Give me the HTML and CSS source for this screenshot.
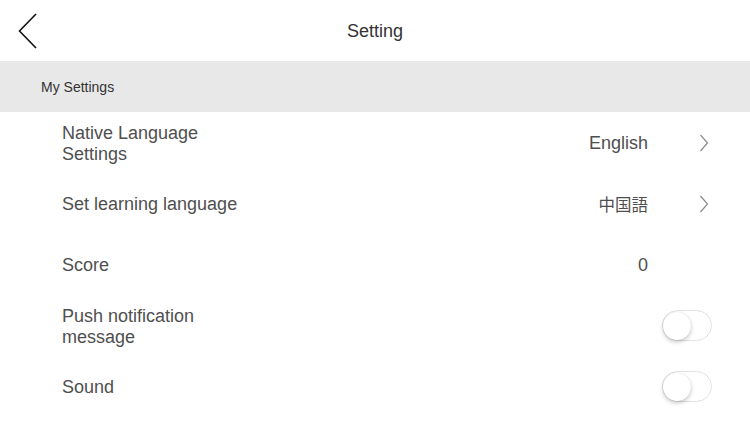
FILE: index.html
```html
<!DOCTYPE html>
<html lang="en">
<head>
<meta charset="utf-8">
<title>Setting</title>
<link rel="stylesheet" href="styles.css">
</head>
<body>
<div class="screen">
  <header class="topbar">
    <button class="back" aria-label="Back">
      <svg width="20" height="36" viewBox="0 0 20 36"><path d="M18 1 L1.5 18 L18 35" fill="none" stroke="#111" stroke-width="1.6"/></svg>
    </button>
    <h1 class="title">Setting</h1>
    <span class="spacer"></span>
  </header>
  <div class="section">My Settings</div>
  <ul class="list">
    <li class="row">
      <span class="label">Native Language Settings</span>
      <span class="value">English</span>
      <span class="trail"><svg class="chev" width="10" height="18" viewBox="0 0 10 18"><path d="M1.5 1 L8.5 9 L1.5 17" fill="none" stroke="#8a8a8a" stroke-width="1.2"/></svg></span>
    </li>
    <li class="row">
      <span class="label">Set learning language</span>
      <span class="value cjk">中国語</span>
      <span class="trail"><svg class="chev" width="10" height="18" viewBox="0 0 10 18"><path d="M1.5 1 L8.5 9 L1.5 17" fill="none" stroke="#8a8a8a" stroke-width="1.2"/></svg></span>
    </li>
    <li class="row">
      <span class="label">Score</span>
      <span class="value">0</span>
      <span class="trail"></span>
    </li>
    <li class="row">
      <span class="label">Push notification message</span>
      <span class="value"></span>
      <span class="trail"><span class="toggle"><span class="knob"></span></span></span>
    </li>
    <li class="row">
      <span class="label">Sound</span>
      <span class="value"></span>
      <span class="trail"><span class="toggle"><span class="knob"></span></span></span>
    </li>
  </ul>
</div>
</body>
</html>
```
FILE: styles.css
```css
* { box-sizing: border-box; }
html, body {
  margin: 0;
  padding: 0;
  background: #fff;
  font-family: "Liberation Sans", Arial, sans-serif;
}
.screen {
  width: 750px;
  height: 422px;
  overflow: hidden;
  background: #fff;
}
.topbar {
  height: 61px;
  display: grid;
  grid-template-columns: 60px 1fr 60px;
  align-items: center;
}
.back {
  border: 0;
  background: none;
  padding: 0 0 0 18px;
  margin: 0;
  height: 61px;
  display: flex;
  align-items: center;
  cursor: pointer;
}
.back svg { display: block; margin-top: 1px; }
.title {
  margin: 0;
  padding-top: 2px;
  text-align: center;
  font-size: 18px;
  font-weight: normal;
  color: #333;
}
.section {
  height: 51px;
  background: #e8e8e8;
  display: flex;
  align-items: center;
  padding-left: 41px;
  font-size: 14px;
  color: #333;
}
.list {
  list-style: none;
  margin: 0;
  padding: 0;
}
.row {
  height: 61px;
  display: flex;
  align-items: center;
  padding-left: 62px;
  padding-right: 38px;
  font-size: 18px;
  line-height: 21px;
  color: #4f4f4f;
}
.label {
  width: 190px;
  padding-top: 2px;
}
.value {
  flex: 1;
  text-align: right;
  padding-right: 14px;
  padding-top: 2px;
}
.cjk {
  font-family: "Noto Sans CJK JP", "Liberation Sans", sans-serif;
  font-size: 16.5px;
  color: #4f4f4f;
}
.trail {
  width: 50px;
  display: flex;
  justify-content: flex-end;
  align-items: center;
}
.chev {
  display: block;
  margin-right: 3px;
}
.toggle {
  width: 51px;
  height: 31px;
  border-radius: 16px;
  border: 1.5px solid #e2e2e2;
  background: #fff;
  display: flex;
  align-items: center;
}
.knob {
  width: 28px;
  height: 28px;
  border-radius: 50%;
  background: #fff;
  box-shadow: 0 2px 4px rgba(0,0,0,0.22), 0 0 1px rgba(0,0,0,0.15);
}
```
